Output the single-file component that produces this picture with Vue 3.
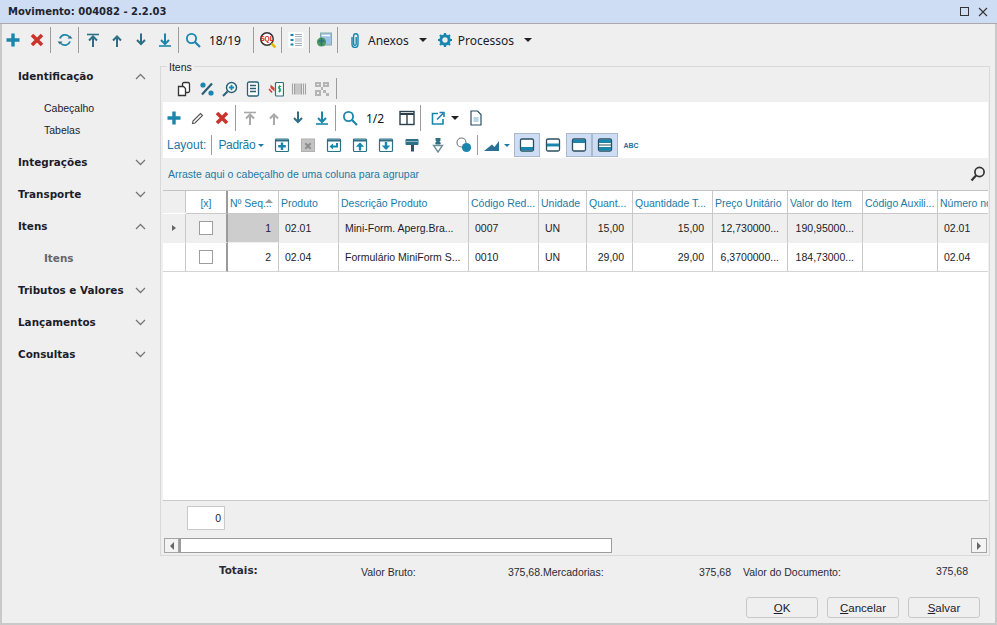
<script setup>
const T = "#1a86ad";
const D = "#2d6f85";
const R = "#c9352c";
const G = "#a9a9a9";

const arrow = (c, bar) => `
  ${bar === "top" ? `<path d="M2 2.5h12" stroke="${c}" stroke-width="1.6"/>` : ""}
  ${bar === "bottom" ? `<path d="M2 14h12" stroke="${c}" stroke-width="1.6"/>` : ""}
`;
const up = (c, bar) =>
  `${arrow(c, bar)}<path d="M8 15V5M4 8.5L8 4.5l4 4" fill="none" stroke="${c}" stroke-width="2"/>`;
const down = (c, bar) =>
  `${arrow(c, bar)}<path d="M8 1.5V11.5M4 8L8 12l4-4" fill="none" stroke="${c}" stroke-width="2"/>`;
const frame = (inner, c = D) =>
  `<rect x="1.5" y="2" width="13" height="12.5" rx="1" fill="#fff" stroke="${c}" stroke-width="1.2"/><path d="M1.5 3.5h13" stroke="${c}" stroke-width="2"/>${inner}`;

const icons = {
  plus: `<path d="M8 1.5v13M1.5 8h13" stroke="${T}" stroke-width="3.4"/>`,
  del: `<path d="M3 3l10 10M13 3L3 13" stroke="${R}" stroke-width="3.6"/>`,
  refresh: `<path d="M3 6.5A5.4 5.4 0 0 1 12 4.5M13 9.5A5.4 5.4 0 0 1 4 11.5" fill="none" stroke="${T}" stroke-width="1.8"/><path d="M10.5 6.5h5l-2.5-3zM5.5 9.5h-5l2.5 3z" fill="${D}"/>`,
  top: up(D, "top"),
  up: up(D),
  down: down(D),
  bottom: down(T, "bottom"),
  topOff: up(G, "top"),
  upOff: up(G),
  search: `<circle cx="6.5" cy="6.5" r="4.6" fill="none" stroke="${T}" stroke-width="1.8"/><path d="M10 10l5 5" stroke="${T}" stroke-width="2.2"/>`,
  sql: `<circle cx="7" cy="7" r="6.2" fill="#fff" stroke="#333" stroke-width="1.5"/><text x="7" y="9.2" font-size="6.6" font-weight="700" text-anchor="middle" fill="#d11" font-family="Liberation Sans">SQL</text><path d="M11.4 11.4l4 4" stroke="#e0bc00" stroke-width="2.6"/>`,
  report: `<rect x="0.5" y="0" width="15" height="16" fill="#fff"/><path d="M2.5 3h3M2.5 8h3M2.5 12.5h3" stroke="${T}" stroke-width="1.8"/><path d="M7 2.5h7M7 4.5h7M7 7h7M7 9h7M7 11.5h7M7 13.5h7" stroke="#a3afbd"/>`,
  image: `<rect x="4.5" y="1" width="11" height="12" fill="#9dc3e6" stroke="#8aa"/><path d="M6 3.5h8" stroke="#fff" stroke-width="1.4"/><circle cx="5.5" cy="10" r="4.6" fill="#4b9a5b"/><path d="M2.5 9h6M5.5 6v7.5" stroke="#2b6e8c" stroke-width="1.6"/>`,
  clip: `<path d="M5 5v7.5a3 3 0 0 0 6 0V4a2.2 2.2 0 0 0-4.4 0v8a1.3 1.3 0 0 0 2.6 0V5" fill="none" stroke="${T}" stroke-width="1.4"/>`,
  gear: `<circle cx="8" cy="8" r="4.2" fill="none" stroke="${T}" stroke-width="3"/><path d="M8 1v3M8 12v3M1 8h3M12 8h3M3 3l2 2M11 11l2 2M13 3l-2 2M5 11l-2 2" stroke="${T}" stroke-width="2.2"/>`,
  copy: `<rect x="6.5" y="1.5" width="7" height="10" rx="1.5" fill="#fff" stroke="#333" stroke-width="1.3"/><path d="M2.5 5.5h5l2 2v7h-7z" fill="#fff" stroke="#333" stroke-width="1.3"/>`,
  percent: `<path d="M13 2.5L3 13.5" stroke="#2b5f78" stroke-width="2.2"/><circle cx="4" cy="4" r="2.6" fill="${T}"/><circle cx="12" cy="12" r="2.6" fill="${T}"/>`,
  zoomIn: `<circle cx="9.5" cy="6.5" r="5" fill="#fff" stroke="#2b5f78" stroke-width="1.5"/><path d="M9.5 3.8v5.4M6.8 6.5h5.4" stroke="${T}" stroke-width="1.8"/><path d="M5.5 10.5L1 15" stroke="#2b5f78" stroke-width="2"/>`,
  list: `<rect x="2.5" y="1" width="11" height="14" rx="1.5" fill="#fff" stroke="#2b5f78" stroke-width="1.3"/><path d="M5 4.5h6M5 7.5h6M5 10.5h6" stroke="#2b5f78" stroke-width="1.4"/>`,
  money: `<rect x="7.5" y="1.5" width="8" height="13.5" rx="1" fill="#fff" stroke="#2b6f85" stroke-width="1.2"/><path d="M13.2 5.5h-2.5v2.3h2v2.4h-2.5M11.5 4.2v7.3" fill="none" stroke="#17a06f" stroke-width="1"/><path d="M6.5 10.5L2.5 7V3.5L6.5 7z" fill="#d5413a"/><path d="M1 8l3 3.5" stroke="#d5413a" stroke-width="1.6"/>`,
  barcode: `<path d="M1.5 2.5v11M3.5 2.5v11M5 2.5v11M7 2.5v11M9 2.5v11M10.5 2.5v11M12.5 2.5v11M14.5 2.5v11" stroke="#a3a3a3" stroke-width="1.1"/>`,
  qr: `<path d="M1 1h6v5H1zM9 1h6v5H9zM1 9h6v6H1zM9 9h3v3H9zM12 12h3v3h-3zM7 6h2v3H7z" fill="#b4b4b4"/><path d="M3 3h2v1H3zM11 3h2v1h-2zM3 11h2v2H3z" fill="#eee"/>`,
  pencil: `<path d="M3 11L10.5 3.5l2 2L5 13l-2.5.5z" fill="#fff" stroke="#555" stroke-width="1.1"/>`,
  columns: `<rect x="1" y="1.5" width="14" height="13" fill="#fff" stroke="#2b3f4c" stroke-width="1.4"/><path d="M1 4h14" stroke="#2b3f4c" stroke-width="2"/><path d="M8 4v10" stroke="#2b3f4c" stroke-width="1.4"/>`,
  external: `<path d="M8 3.5H2.5v10.5h10.5V9" fill="none" stroke="${T}" stroke-width="1.6"/><path d="M7 9.5l6-6M9.5 2.5H14V7" fill="none" stroke="${T}" stroke-width="1.6"/>`,
  page: `<path d="M3 1h6.5L13 4.5V15H3z" fill="#fff" stroke="#2b4f60" stroke-width="1.2"/><path d="M5.5 7h5v5h-5z" fill="#b9d5e3"/>`,
  addRow: frame(`<path d="M8 5.5v7.5M4.2 9.2h7.6" stroke="${T}" stroke-width="2.4"/>`),
  delRow: `<rect x="1.5" y="2" width="13" height="12.5" fill="#c4c4c4" stroke="#b0b0b0"/><path d="M5.3 6.3l5.4 5.4M10.7 6.3l-5.4 5.4" stroke="#8e8e8e" stroke-width="2"/>`,
  enterRow: frame(`<path d="M11 6v3.5H6" fill="none" stroke="${T}" stroke-width="2"/><path d="M7 6.5L3.5 9.5 7 12.5z" fill="${T}"/>`),
  upRow: frame(`<path d="M8 6.5v7" stroke="${T}" stroke-width="2.4"/><path d="M3.8 9.8L8 5.5l4.2 4.3z" fill="${T}"/>`),
  downRow: frame(`<path d="M8 5v7" stroke="${T}" stroke-width="2.4"/><path d="M3.8 8.5L8 13l4.2-4.5z" fill="${T}"/>`),
  roller: `<rect x="1.5" y="2" width="13" height="6" rx="1" fill="${D}"/><path d="M1.5 4.5h13" stroke="#8fb3c1"/><path d="M7 8h3v6.5H7z" fill="#2d5566"/>`,
  pin: `<path d="M5.5 1h5v2.5l-1 1 1.5 1.5-1 1.5h-4l-1-1.5L6.5 4.5l-1-1z" fill="${D}"/><path d="M3.5 8.5h9L8 15z" fill="none" stroke="#6f8f9c" stroke-width="1.4"/>`,
  shapes: `<circle cx="5.5" cy="5.5" r="4.5" fill="#fff" stroke="#777" stroke-width="1.1"/><circle cx="10.5" cy="10.5" r="4.6" fill="${T}"/>`,
  chart: `<path d="M0 14L8 7.5l2.5 2.5L15 4v10z" fill="#2b6f96"/>`,
  lineBottom: `<rect x="1.5" y="2" width="13" height="12" rx="1.5" fill="#fff" stroke="#2b4f60" stroke-width="1.3"/><path d="M2 10h12v3.4H2z" fill="${T}"/>`,
  lineMiddle: `<rect x="1.5" y="2" width="13" height="12" rx="1.5" fill="#fff" stroke="#2b4f60" stroke-width="1.3"/><path d="M2 6.5h12v3H2z" fill="${T}"/>`,
  lineTop: `<rect x="1.5" y="2" width="13" height="12" rx="1.5" fill="#fff" stroke="#2b4f60" stroke-width="1.3"/><path d="M2 2.6h12v3.4H2z" fill="${T}"/>`,
  lineBoth: `<rect x="1.5" y="2" width="13" height="12" rx="1.5" fill="#fff" stroke="#2b4f60" stroke-width="1.3"/><path d="M2 2.6h12v3.4H2zM2 10h12v3.4H2z" fill="${T}"/><path d="M2 8h12" stroke="#2b4f60"/>`,
  abc: `<text x="8" y="10.5" font-size="7" font-weight="700" text-anchor="middle" fill="#2b6f96" font-family="Liberation Sans">ABC</text>`,
};

const mainBar = ["plus", "del", "|", "refresh", "|", "top", "up", "down", "bottom", "|", "search"];
const mainBarEnd = ["|", "sql", "|", "report", "|", "image", "|"];
const itemsBar = ["copy", "percent", "zoomIn", "list", "money", "barcode", "qr"];
const gridBar = ["plus", "pencil", "del", "|", "topOff", "upOff", "down", "bottom", "|", "search"];
const layoutIcons = ["addRow", "delRow", "enterRow", "upRow", "downRow", "roller", "pin", "shapes"];
const layoutToggles = [
  { i: "lineBottom", on: true },
  { i: "lineMiddle", on: false },
  { i: "lineTop", on: true },
  { i: "lineBoth", on: true },
];

const nav = [
  { t: "Identificação", open: true, subs: ["Cabeçalho", "Tabelas"] },
  { t: "Integrações" },
  { t: "Transporte" },
  { t: "Itens", open: true, subs: ["Itens"], strong: true },
  { t: "Tributos e Valores" },
  { t: "Lançamentos" },
  { t: "Consultas" },
];

const headers = [
  "Nº Seq...",
  "Produto",
  "Descrição Produto",
  "Código Red...",
  "Unidade",
  "Quant...",
  "Quantidade T...",
  "Preço Unitário",
  "Valor do Item",
  "Código Auxili...",
  "Número no",
];
const rows = [
  ["1", "02.01", "Mini-Form. Aperg.Bra...", "0007", "UN", "15,00", "15,00", "12,730000...", "190,95000...", "", "02.01"],
  ["2", "02.04", "Formulário MiniForm S...", "0010", "UN", "29,00", "29,00", "6,3700000...", "184,73000...", "", "02.04"],
];
const rightCols = [0, 5, 6, 7, 8];
</script>

<template>
  <div class="win">
    <header class="title">
      <b>Movimento: 004082 - 2.2.03</b>
      <span class="win-btns">
        <i class="max"></i>
        <svg width="10" height="10" viewBox="0 0 10 10"><path d="M1 1l8 8M9 1L1 9" stroke="#333" stroke-width="1.1" /></svg>
      </span>
    </header>

    <div class="bar main-bar">
      <template v-for="b in mainBar" :key="b">
        <span v-if="b === '|'" class="sep"></span>
        <span v-else class="btn"><svg class="ic" viewBox="0 0 16 16" v-html="icons[b]"></svg></span>
      </template>
      <span class="pager">18/19</span>
      <template v-for="(b, n) in mainBarEnd" :key="n">
        <span v-if="b === '|'" class="sep"></span>
        <span v-else class="btn"><svg class="ic" viewBox="0 0 16 16" v-html="icons[b]"></svg></span>
      </template>
      <span class="menu clip-menu">
        <svg class="ic" viewBox="0 0 16 16" v-html="icons.clip"></svg>
        <span class="menu-t">Anexos</span><i class="caret"></i>
      </span>
      <span class="menu gear-menu">
        <svg class="ic" viewBox="0 0 16 16" v-html="icons.gear"></svg>
        <span class="menu-t">Processos</span><i class="caret"></i>
      </span>
    </div>

    <div class="body">
      <nav class="side">
        <template v-for="n in nav" :key="n.t">
          <div class="nav-h">
            <span>{{ n.t }}</span>
            <svg width="11" height="7" viewBox="0 0 11 7">
              <path :d="n.open ? 'M1 6l4.5-4.5L10 6' : 'M1 1l4.5 4.5L10 1'" fill="none" stroke="#777" stroke-width="1.3" />
            </svg>
          </div>
          <div v-if="n.subs" class="subs" :class="{ strong: n.strong }">
            <div v-for="s in n.subs" :key="s" class="nav-s">{{ s }}</div>
          </div>
        </template>
      </nav>

      <section class="group">
        <span class="legend">Itens</span>
        <div class="items-bar">
          <span v-for="b in itemsBar" :key="b" class="btn b23"><svg class="ic" viewBox="0 0 16 16" v-html="icons[b]"></svg></span>
          <span class="sep short"></span>
        </div>

        <div class="panel">
          <div class="grid-bar">
            <template v-for="(b, n) in gridBar" :key="n">
              <span v-if="b === '|'" class="sep mid"></span>
              <span v-else class="btn"><svg class="ic" viewBox="0 0 16 16" v-html="icons[b]"></svg></span>
            </template>
            <span class="pager small">1/2</span>
            <span class="btn"><svg class="ic" viewBox="0 0 16 16" v-html="icons.columns"></svg></span>
            <span class="sep mid"></span>
            <span class="btn ext"><svg class="ic" viewBox="0 0 16 16" v-html="icons.external"></svg></span>
            <i class="caret ext-caret"></i>
            <span class="btn"><svg class="ic" viewBox="0 0 16 16" v-html="icons.page"></svg></span>
          </div>
          <div class="layout-bar">
            <span class="lay-t">Layout:</span>
            <span class="sep low"></span>
            <span class="lay-t pad">Padrão</span><i class="caret blue"></i>
            <span class="lay-icons">
              <span v-for="b in layoutIcons" :key="b" class="btn b26"><svg class="ic" viewBox="0 0 16 16" v-html="icons[b]"></svg></span>
            </span>
            <span class="sep low s2"></span>
            <span class="btn chart"><svg class="ic" viewBox="0 0 16 16" v-html="icons.chart"></svg></span>
            <i class="caret blue tiny"></i>
            <span
              v-for="b in layoutToggles"
              :key="b.i"
              class="btn b26 toggle"
              :class="{ on: b.on }"
            ><svg class="ic" viewBox="0 0 16 16" v-html="icons[b.i]"></svg></span>
            <span class="btn b26"><svg class="ic" viewBox="0 0 16 16" v-html="icons.abc"></svg></span>
          </div>
        </div>

        <div class="drop">
          <span>Arraste aqui o cabeçalho de uma coluna para agrupar</span>
          <svg width="16" height="16" viewBox="0 0 16 16">
            <circle cx="9.5" cy="6" r="4.6" fill="none" stroke="#333" stroke-width="1.7" />
            <path d="M6 9.5L1.5 14.5" stroke="#333" stroke-width="2.2" />
          </svg>
        </div>

        <div class="table">
          <div class="th blank"></div>
          <div class="th chk-h">[x]</div>
          <div v-for="(h, n) in headers" :key="h" class="th" :class="{ seq: n === 0 }">
            {{ h }}<i v-if="n === 0" class="sort"></i>
          </div>
          <template v-for="(r, y) in rows" :key="y">
            <div class="td blank" :class="{ alt: y === 0 }"><i v-if="y === 0" class="pointer"></i></div>
            <div class="td chk-c" :class="{ alt: y === 0 }"><i class="box"></i></div>
            <div
              v-for="(c, n) in r"
              :key="n"
              class="td"
              :class="{ alt: y === 0, right: rightCols.includes(n), seq: n === 0, picked: y === 0 && n === 0 }"
            >{{ c }}</div>
          </template>
        </div>

        <div class="summary"><span class="sum">0</span></div>

        <div class="scroll">
          <span class="sb-btn"><i class="tri left"></i></span>
          <span class="thumb"></span>
          <span class="sb-btn end"><i class="tri rgt"></i></span>
        </div>
      </section>
    </div>

    <div class="totals">
      <b class="tot-h">Totais:</b>
      <span class="lbl l1">Valor Bruto:</span>
      <span class="val v1">375,68</span>
      <span class="lbl l2">.Mercadorias:</span>
      <span class="val v2">375,68</span>
      <span class="lbl l3">Valor do Documento:</span>
      <span class="val v3">375,68</span>
    </div>

    <footer class="actions">
      <button><u>O</u>K</button>
      <button><u>C</u>ancelar</button>
      <button><u>S</u>alvar</button>
    </footer>
  </div>
</template>

<style>
html,
body {
  margin: 0;
  overflow: hidden;
}
</style>

<style scoped>
.win {
  width: 997px;
  height: 625px;
  box-sizing: border-box;
  display: flex;
  flex-direction: column;
  background: #efefef;
  border: 2px solid #c9c9c9;
  border-top: 0;
  font: 10.5px "Liberation Sans", Arial, sans-serif;
  color: #1c1c2a;
}
.title {
  flex: none;
  height: 23px;
  margin: 0 -2px;
  padding: 0 8px;
  display: flex;
  align-items: center;
  justify-content: space-between;
  background: #cfddf4;
  border-bottom: 1px solid #a9a9a9;
}
.title b {
  font: bold 10px "DejaVu Sans", sans-serif;
  color: #1e2430;
}
.win-btns {
  display: flex;
  align-items: center;
  gap: 9px;
  margin-right: 1px;
}
.max {
  width: 7px;
  height: 7px;
  border: 1px solid #333;
}

.bar {
  flex: none;
  height: 32px;
  display: flex;
  align-items: center;
}
.btn {
  flex: none;
  width: 24px;
  height: 24px;
  display: flex;
  align-items: center;
  justify-content: center;
}
.b23 {
  width: 23px;
}
.b26 {
  width: 26px;
}
.ic {
  display: block;
  width: 16px;
  height: 16px;
}
.sep {
  flex: none;
  width: 1px;
  height: 26px;
  margin: 0 2px 0 1px;
  background: #9c9c9c;
}
.main-bar > .btn:first-child {
  margin-left: -1px;
}
.pager {
  flex: none;
  width: 47px;
  padding-left: 4px;
  box-sizing: border-box;
  font: 12px "Noto Sans", sans-serif;
  color: #11111d;
}
.menu {
  display: flex;
  align-items: center;
  font: 12px "Noto Sans", sans-serif;
}
.menu-t {
  margin-left: 5px;
}
.clip-menu {
  margin-left: 7px;
}
.gear-menu {
  margin-left: 10px;
}
.caret {
  flex: none;
  width: 0;
  height: 0;
  margin-left: 10px;
  border: 4px solid transparent;
  border-top: 4px solid #222;
  border-bottom: 0;
}

.body {
  flex: 1;
  min-height: 0;
  display: flex;
}
.side {
  flex: none;
  width: 158px;
  padding-top: 4px;
  box-sizing: border-box;
}
.nav-h {
  height: 32px;
  padding: 0 14px 0 16px;
  display: flex;
  align-items: center;
  justify-content: space-between;
  font: bold 10.4px "DejaVu Sans", sans-serif;
  color: #1c1c2a;
}
.subs {
  padding: 5px 0;
}
.nav-s {
  height: 22px;
  padding-left: 42px;
  display: flex;
  align-items: center;
}
.subs.strong {
  padding: 0;
}
.subs.strong .nav-s {
  height: 32px;
  font: bold 10.4px "DejaVu Sans", sans-serif;
  color: #666;
}

.group {
  position: relative;
  flex: none;
  width: 830px;
  height: 490px;
  margin-top: 10px;
  padding: 0 1px 0 2px;
  box-sizing: border-box;
  display: flex;
  flex-direction: column;
  border: 1px solid #d9d9d9;
}
.legend {
  position: absolute;
  left: 6px;
  top: -6px;
  padding: 0 2px;
  background: #efefef;
  line-height: 12px;
}
.items-bar {
  flex: none;
  height: 35px;
  padding: 8px 0 0 9px;
  box-sizing: border-box;
  display: flex;
  align-items: center;
}
.sep.short {
  height: 21px;
  margin-left: 3px;
}
.panel {
  flex: none;
  height: 56px;
  background: #fff;
}
.grid-bar {
  height: 32px;
  margin-left: -1px;
  display: flex;
  align-items: center;
}
.sep.mid {
  height: 26px;
}
.pager.small {
  width: 33px;
}
.ext {
  margin-left: 3px;
  margin-right: -1px;
}
.ext-caret {
  margin: 0 5px 0 2px;
}
.layout-bar {
  height: 24px;
  margin-top: -1px;
  display: flex;
  align-items: center;
  color: #1b79a6;
}
.lay-t {
  flex: none;
  padding-left: 4px;
  font-size: 12px;
}
.lay-t.pad {
  letter-spacing: -0.3px;
}
.sep.low {
  height: 20px;
  margin: 0 2px 0 5px;
}
.caret.blue {
  margin-left: 3px;
  border-width: 3px;
  border-top: 3px solid #1b79a6;
  border-bottom: 0;
}
.caret.tiny {
  margin: 0 4px 0 -1px;
}
.lay-icons {
  display: flex;
  margin-left: 5px;
}
.sep.s2 {
  margin: 0 1px 0 0;
}
.chart {
  width: 26px;
}
.toggle {
  box-sizing: border-box;
  border: 1px solid transparent;
}
.toggle.on {
  background: #cfddf4;
  border-color: #a9b9ce;
}
.drop {
  flex: none;
  height: 32px;
  padding: 0 2px 0 5px;
  display: flex;
  align-items: center;
  justify-content: space-between;
  color: #1b79a6;
  background: #efefef;
}

.table {
  flex: 1;
  min-height: 0;
  display: grid;
  grid-template-columns: 23px 42px 51px 60px 130px 70px 48px 46px 80px 75px 75px 75px 51px;
  grid-auto-rows: min-content;
  align-content: start;
  background: #fff;
  border-top: 1px solid #c4c4c4;
  border-bottom: 1px solid #c9c9c9;
  overflow: hidden;
}
.th {
  position: relative;
  height: 21px;
  padding: 1px 0 0 2px;
  display: flex;
  align-items: center;
  white-space: nowrap;
  overflow: hidden;
  color: #1b79a6;
  border-right: 1px solid #c9c9c9;
  border-bottom: 1px solid #c9c9c9;
  background: #fff;
  min-width: 0;
}
.th.blank {
  padding: 0;
  background: #efefef;
  border-bottom-color: transparent;
}
.chk-h {
  justify-content: center;
  padding: 1px 0 0;
}
.th.chk-h,
.td.chk-c {
  border-right: 2px solid #9a9a9a;
}
.sort {
  position: absolute;
  right: 5px;
  top: 8px;
  width: 0;
  height: 0;
  border: 4px solid transparent;
  border-top: 0;
  border-bottom: 4px solid #9b9b9b;
}
.td {
  height: 28px;
  padding: 0 8px 0 6px;
  display: flex;
  align-items: center;
  white-space: nowrap;
  overflow: hidden;
  border-right: 1px solid #c9c9c9;
  min-width: 0;
}
.td:nth-last-child(-n + 13) {
  border-bottom: 1px solid #d4d4d4;
}
.td.alt {
  background: #efefef;
  border-bottom: 1px solid #efefef;
}
.td.right {
  justify-content: flex-end;
}
.td.seq {
  padding-right: 7px;
}
.td.picked {
  background: #cdcdcd;
}
.td.blank {
  padding: 0 0 0 9px;
}
.chk-c {
  justify-content: center;
  padding: 0;
}
.box {
  width: 12px;
  height: 12px;
  border: 1px solid #9d9d9d;
  background: #fff;
}
.pointer {
  width: 0;
  height: 0;
  border: 3.5px solid transparent;
  border-left: 4px solid #666;
  border-right: 0;
}

.summary {
  flex: none;
  height: 37px;
  padding: 5px 0 0 24px;
  box-sizing: border-box;
}
.sum {
  display: block;
  width: 38px;
  height: 24px;
  box-sizing: border-box;
  padding-right: 3px;
  line-height: 22px;
  text-align: right;
  background: #fff;
  border: 1px solid #c9c9c9;
}
.scroll {
  flex: none;
  height: 15px;
  margin: 0 1px 2px 1px;
  display: flex;
}
.sb-btn {
  flex: none;
  width: 15px;
  height: 15px;
  box-sizing: border-box;
  display: flex;
  align-items: center;
  justify-content: center;
  background: #f3f3f3;
  border: 1px solid #a5a5a5;
}
.sb-btn.end {
  margin-left: auto;
  width: 16px;
}
.thumb {
  width: 433px;
  box-sizing: border-box;
  background: #fff;
  border: 1px solid #9c9c9c;
  border-left-width: 2px;
}
.tri {
  width: 0;
  height: 0;
  border: 4px solid transparent;
}
.tri.left {
  border-right: 4px solid #666;
  border-left: 0;
}
.tri.rgt {
  border-left: 4px solid #666;
  border-right: 0;
}

.totals {
  flex: none;
  height: 41px;
  display: grid;
  grid-template-columns: 217px 142px 82px 97px 100px 91px 12px 100px 125px;
  grid-template-rows: 32px;
  align-items: center;
  color: #2a2a36;
}
.tot-h {
  grid-column: 2;
  grid-row: 1;
  font: bold 10.4px "DejaVu Sans", sans-serif;
  margin-top: -4px;
}
.l1 {
  grid-column: 3 / 5;
  grid-row: 1;
}
.v1 {
  grid-column: 4;
  grid-row: 1;
  justify-self: end;
}
.l2 {
  grid-column: 5 / 7;
  grid-row: 1;
}
.v2 {
  grid-column: 6;
  grid-row: 1;
  justify-self: end;
}
.l3 {
  grid-column: 8 / 10;
  grid-row: 1;
}
.v3 {
  grid-column: 9;
  grid-row: 1;
  justify-self: end;
  margin-top: -2px;
}
.actions {
  flex: none;
  height: 26px;
  padding-right: 15px;
  display: flex;
  justify-content: flex-end;
  gap: 9px;
}
.actions button {
  width: 72px;
  height: 21px;
  padding: 0;
  font: 11.5px "Liberation Sans", Arial, sans-serif;
  color: #1c1c2a;
  background: #efefef;
  border: 1px solid #c8c8c8;
  border-radius: 3px;
}
</style>
